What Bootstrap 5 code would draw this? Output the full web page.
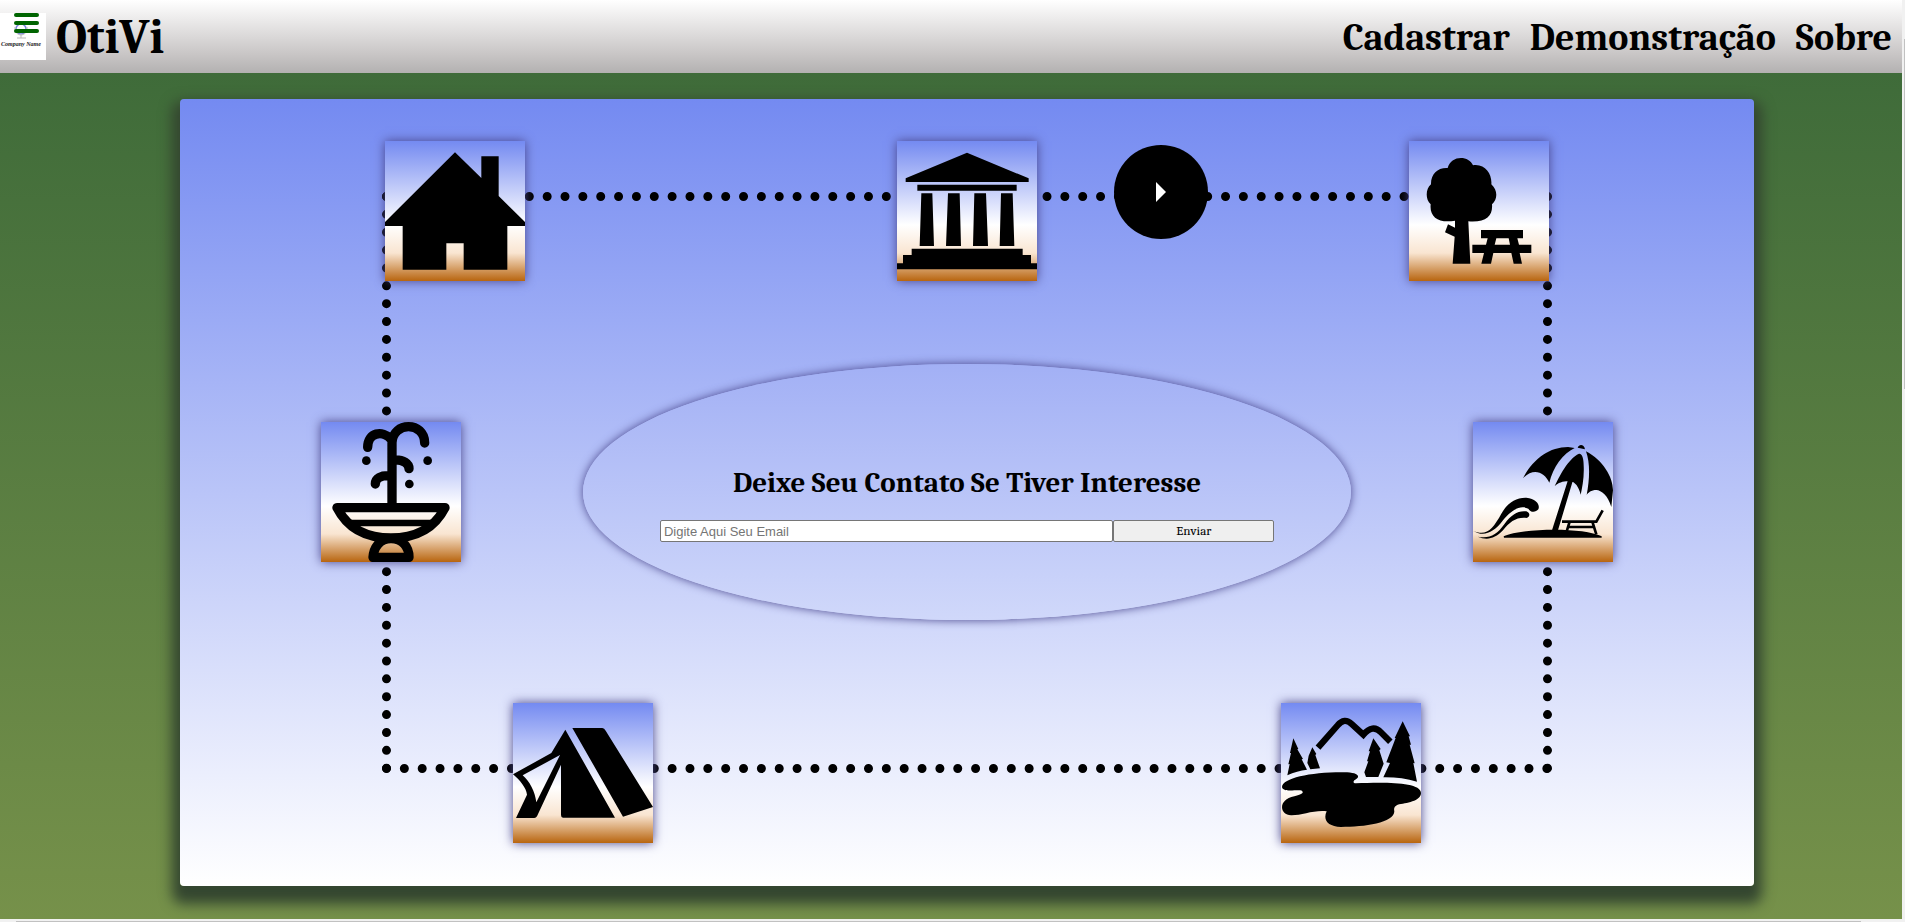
<!DOCTYPE html>
<html lang="pt-BR">
<head>
<meta charset="utf-8">
<meta name="viewport" content="width=device-width, initial-scale=1">
<title>OtiVi</title>
<link href="https://cdn.jsdelivr.net/npm/bootstrap@5.3.0/dist/css/bootstrap.min.css" rel="stylesheet">
<style>
  body { font-family: Cambria, Caladea, "Liberation Serif", serif; color: #000; background: #f1f1f1; }
  .page-area { margin: 0 3px 3px 0; background: linear-gradient(#3a6838, #76914a); }
  .top-bar { height: 73px; background: linear-gradient(#fff, #c8c5c5 75%, #b3b1b1); font-weight: 700; }
  .brand-box { width: 46px; height: 47px; background: #fff; }
  .menu-btn { top: 0; left: 14px; width: 25px; height: 20px; }
  .menu-btn span { height: 4px; border-radius: 2px; background: #006400; }
  .brand-name { font-size: 48px; line-height: 60px; padding: 3px 0 0 10px; }
  .top-links { gap: 20px; padding: 3px 10px 0 0; }
  .top-links a { color: #000; font-size: 38px; line-height: 60px; }
  .board-wrap { padding: 26px 7.8% 33px 9.45%; }
  .board { padding: 42px 0 43px; gap: 83px; border-radius: 4px; background: linear-gradient(#748af1, #fff); box-shadow: 0 10px 13px 8px #344630; }
  .board-row { z-index: 1; }
  .row-top { padding: 0 13% 0 13.05%; }
  .row-mid { padding: 0 8.95% 0 9%; }
  .row-low { padding: 0 21.15%; }
  .trail { inset: 93px 202px 113px; border: 9px dotted #000; }
  .play-btn { top: -56px; left: 62.8%; width: 94px; height: 94px; }
  .tile { width: 140px; height: 140px; color: #000; background: linear-gradient(#748af1, #fff 60%, #f9e5d1 80%, #b8650f); box-shadow: 0 0 10px #48458b; }
  .tile svg, .play-btn svg { width: 100%; height: 100%; }
  .contact { flex: 0 1 768px; height: 256px; padding-top: 24px; border-radius: 50%; box-shadow: 0 0 10px #48458b; background: linear-gradient(#a2b0f5, #d0d8fa); }
  .contact h2 { font-size: 29px; line-height: 34px; font-weight: 700; margin: 0 0 20px; }
  .contact form { width: 80%; }
  .contact input, .contact button { height: 22px; border: 1px solid #767676; border-radius: 2px; font-size: 13px; line-height: 16px; }
  .contact input { flex: 1 1 0; min-width: 0; padding: 1px 3px; font-family: "Liberation Sans", Arial, sans-serif; background: #fff; }
  .contact input::placeholder { color: #757575; }
  .contact button { width: 161px; padding: 1px 6px; background: #efefef; color: #000; }
  .v-thumb { top: 39px; right: 0; width: 1px; height: 350px; background: #c1c1c1; }
  .h-thumb { bottom: 0; left: 16px; right: 44px; height: 1px; background: #c1c1c1; }
</style>
</head>
<body>
<div class="position-relative overflow-hidden">
<div class="page-area">
  <header class="top-bar d-flex align-items-center justify-content-between">
    <div class="d-flex align-items-center">
      <div class="brand-box position-relative">
        <svg class="d-block" width="46" height="47" viewBox="0 0 46 47" role="img" aria-label="Company Name">
          <circle cx="21" cy="16" r="5" fill="none" stroke="#7c86dd" stroke-width="1.5"/>
          <path d="M15 14v2a6 6 0 0 0 12 0v-2M21 22v3M17 25h9" fill="none" stroke="#bbb" stroke-width="1"/>
          <text x="1" y="33" font-size="6" font-style="italic" font-weight="700" font-family="Liberation Serif, serif" fill="#222">Company Name</text>
        </svg>
        <button type="button" class="menu-btn position-absolute d-flex flex-column justify-content-between border-0 bg-transparent p-0" aria-label="Menu">
          <span class="w-100"></span><span class="w-100"></span><span class="w-100"></span>
        </button>
      </div>
      <a href="#" class="brand-name text-reset text-decoration-none">OtiVi</a>
    </div>
    <nav class="top-links d-flex" aria-label="Principal">
      <a href="#" class="text-decoration-none">Cadastrar</a>
      <a href="#" class="text-decoration-none">Demonstração</a>
      <a href="#" class="text-decoration-none">Sobre</a>
    </nav>
  </header>

  <main class="board-wrap">
    <div class="board position-relative d-flex flex-column">
      <div class="trail position-absolute">
        <button type="button" class="play-btn position-absolute border-0 bg-transparent p-0" aria-label="Reproduzir">
          <svg class="d-block" viewBox="0 0 94 94"><circle cx="47" cy="47" r="47"/><path d="M42 37l10 10-10 10z" fill="#fff"/></svg>
        </button>
      </div>

      <div class="board-row row-top d-flex justify-content-between pe-none">
        <a href="#" class="tile pe-auto" aria-label="Casa"><svg class="d-block" viewBox="0 0 420 420"><path d="M210 34L289 111V46H341V165L420 243V255H367V386H236V307H184V386H53V255H0V243z"/></svg></a>
        <a href="#" class="tile pe-auto" aria-label="Museu"><svg class="d-block" viewBox="0 0 420 420"><path d="M210 35L395 112V123H26V112zM61 131H359V149H61zM73 157H106L111 315H68zM153 157H188L192 315H147zM232 157H267L273 315H228zM312 157H347L352 315H308zM44 323H377V342H402V367H420V385H0V367H18V342H44z"/></svg></a>
        <a href="#" class="tile pe-auto" aria-label="Parque"><svg class="d-block" viewBox="0 0 420 420"><path d="M116 81C125 42 180 42 192 73C228 67 250 100 247 130C267 148 266 175 249 190C252 225 232 245 178 241L184 368H131L137 287L108 274L117 250L138 260V239C90 247 61 230 65 190C49 175 49 145 66 130C65 98 87 79 116 81zM216 267H342V292H325L330 311H367V336H332L339 368H314L307 336H253L246 368H217L225 336H190V311H231L236 292H216zM262 292L257 311H303L299 292z" fill-rule="evenodd"/></svg></a>
      </div>

      <div class="board-row row-mid d-flex justify-content-between align-items-center">
        <a href="#" class="tile" aria-label="Fonte"><svg class="d-block" viewBox="0 0 420 420"><g fill="none" stroke="#000" stroke-width="28" stroke-linecap="round" stroke-linejoin="round"><path d="M213 250V62C215-2 311-2 311 63M140 76C140 30 185 25 209 50M218 114C248 112 264 125 264 140M163 186C163 168 180 160 205 161M48 257H372C340 320 285 348 210 348C135 348 80 320 48 257zM156 406H264C264 375 245 350 210 350C175 350 158 378 156 406z"/><path d="M80 303H340" stroke-width="20"/></g><circle cx="136" cy="116" r="13"/><circle cx="320" cy="116" r="13"/><circle cx="265" cy="186" r="13"/></svg></a>

        <section class="contact d-flex flex-column align-items-center justify-content-center">
          <h2 class="text-center">Deixe Seu Contato Se Tiver Interesse</h2>
          <form class="d-flex">
            <input type="email" placeholder="Digite Aqui Seu Email" aria-label="Digite Aqui Seu Email">
            <button type="button">Enviar</button>
          </form>
        </section>

        <a href="#" class="tile" aria-label="Praia"><svg class="d-block" viewBox="0 0 420 420"><path d="M150 169C180 110 230 75 285 75L305 78C270 95 240 135 229 182C215 150 180 135 150 169zM245 193C258 165 285 110 318 95C328 94 332 110 332 130C334 165 328 195 323 218C318 195 305 175 285 177C270 178 255 182 245 193zM339 88C390 115 420 165 420 205L415 255C405 220 385 205 370 204C355 204 345 212 341 219C350 170 352 125 339 88zM314 77C318 66 333 66 336 82zM285 174L299 178L254 328H236zM92 343C150 318 330 315 386 343V347H93zM0 326C40 345 60 320 85 275C105 240 130 226 160 227C190 230 202 248 196 262C188 272 172 272 166 260C140 248 115 265 90 295C60 335 30 345 0 326zM14 344C50 350 70 340 95 305C115 278 135 265 160 268C172 272 172 285 160 288C130 285 110 300 90 325C65 352 40 355 14 344z"/><path d="M267 299H370L389 265M290 299L281 328M358 299L370 337M285 315H362" fill="none" stroke="#000" stroke-width="8"/></svg></a>
      </div>

      <div class="board-row row-low d-flex justify-content-between">
        <a href="#" class="tile" aria-label="Acampamento"><svg class="d-block" viewBox="0 0 420 420"><path d="M178 75H268Q274 75 278 83L420 312L330 341zM157 80L306 344H150Q144 344 144 336V185L72 340Q69 345 64 345H9L42 275C40 255 20 230 0 214L115 150zM29 217C50 235 66 265 70 298L141 156z" fill-rule="evenodd"/></svg></a>
        <a href="#" class="tile" aria-label="Lago"><svg class="d-block" viewBox="0 0 420 420"><path d="M111 134L170 67Q190 42 212 63L247 95Q275 62 300 88L328 116" fill="none" stroke="#000" stroke-width="19"/><path d="M37 106L52 138L49 139L66 168L62 169L78 200Q48 203 19 217L26 183L22 184L30 150L27 150zM94 133L106 153L103 156L117 196L88 199L79 180L83 158zM277 106L299 138L295 142L308 182L292 222H255L250 208L262 175H258L267 145H263zM365 55L387 100H383L390 125H386L401 181L397 180L408 236Q360 222 307 223L327 180L316 178L344 105H341zM3 252C5 225 90 207 190 208C225 208 245 218 220 232C215 238 218 241 225 241C300 238 420 235 420 270C420 295 375 300 350 305C340 310 338 315 340 325C340 360 250 372 180 372C140 370 125 350 137 325C100 320 60 338 30 337C-5 335-10 290 40 280C60 273 70 272 63 263C50 258 5 270 3 252z"/></svg></a>
      </div>
    </div>
  </main>
</div>
<div class="v-thumb position-absolute"></div>
<div class="h-thumb position-absolute"></div>
</div>
<script src="https://cdn.jsdelivr.net/npm/bootstrap@5.3.0/dist/js/bootstrap.bundle.min.js"></script>
</body>
</html>
